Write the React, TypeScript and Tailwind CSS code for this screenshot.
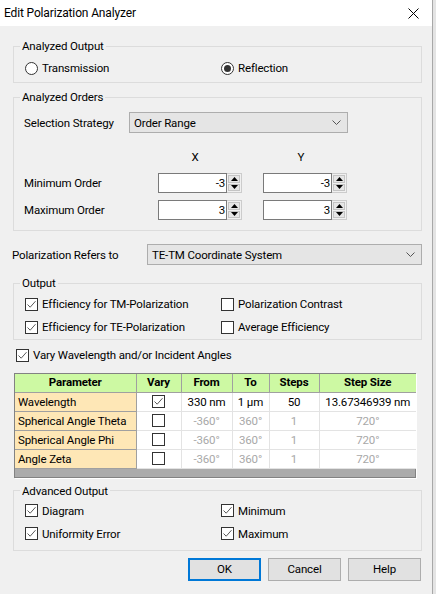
import React from 'react';

function Check({ checked }: { checked?: boolean }) {
  return (
    <span className="flex h-[13px] w-[13px] shrink-0 items-center justify-center border border-[#333333] bg-white">
      {checked && (
        <svg width="11" height="11" viewBox="0 0 11 11">
          <path d="M1.5 5.5 L4.2 8.2 L9.5 2.2" fill="none" stroke="#5a5a5a" strokeWidth="1" />
        </svg>
      )}
    </span>
  );
}

function Radio({ checked }: { checked?: boolean }) {
  return (
    <span className="flex h-[13px] w-[13px] shrink-0 items-center justify-center rounded-full border border-[#333333] bg-white">
      {checked && <span className="h-[7px] w-[7px] rounded-full bg-[#333333]" />}
    </span>
  );
}

function CheckRow({ label, checked }: { label: string; checked?: boolean }) {
  return (
    <div className="flex h-[16px] items-center gap-[4px]">
      <Check checked={checked} />
      <span>{label}</span>
    </div>
  );
}

function Chevron() {
  return (
    <svg width="9" height="5" viewBox="0 0 9 5">
      <path d="M0.5 0.5 L4.5 4.5 L8.5 0.5" fill="none" stroke="#555555" strokeWidth="1" />
    </svg>
  );
}

function Select({ value, className }: { value: string; className: string }) {
  return (
    <div
      className={`flex h-[21px] items-center justify-between border border-[#adadad] bg-[#e5e5e5] pl-[4px] pr-[6px] ${className}`}
    >
      <span>{value}</span>
      <Chevron />
    </div>
  );
}

function SpinBox({ value }: { value: string }) {
  return (
    <div className="flex h-[20px] w-[84px]">
      <div className="flex flex-1 items-center justify-end border border-[#7a7a7a] bg-white pr-[1px]">{value}</div>
      <div className="flex w-[15px] flex-col gap-[1px] border border-l-0 border-[#cccccc] bg-[#f0f0f0] p-[1px]">
        <div className="flex flex-1 items-center justify-center border border-[#c4c4c4] bg-[#e6e6e6]">
          <svg width="7" height="4" viewBox="0 0 7 4">
            <path d="M0 4 L3.5 0 L7 4 Z" fill="#000" />
          </svg>
        </div>
        <div className="flex flex-1 items-center justify-center border border-[#c4c4c4] bg-[#e6e6e6]">
          <svg width="7" height="4" viewBox="0 0 7 4">
            <path d="M0 0 L3.5 4 L7 0 Z" fill="#000" />
          </svg>
        </div>
      </div>
    </div>
  );
}

function Group({
  title,
  className,
  inner,
  children,
}: {
  title: string;
  className?: string;
  inner?: string;
  children: React.ReactNode;
}) {
  return (
    <fieldset className={`w-[409px] shrink-0 border border-[#dcdcdc] ${className ?? ''}`}>
      <legend className="ml-[6px] px-[2px] leading-[16px]">{title}</legend>
      <div className={inner}>{children}</div>
    </fieldset>
  );
}

const rows = [
  { name: 'Wavelength', vary: true, from: '330 nm', to: '1 µm', steps: '50', size: '13.67346939 nm' },
  { name: 'Spherical Angle Theta', vary: false, from: '-360°', to: '360°', steps: '1', size: '720°' },
  { name: 'Spherical Angle Phi', vary: false, from: '-360°', to: '360°', steps: '1', size: '720°' },
  { name: 'Angle Zeta', vary: false, from: '-360°', to: '360°', steps: '1', size: '720°' },
];

const headers = ['Parameter', 'Vary', 'From', 'To', 'Steps', 'Step Size'];
const widths = ['w-[121px]', 'w-[45px]', 'w-[51px]', 'w-[37px]', 'w-[50px]', 'w-[97px]'];

function ParamTable() {
  return (
    <div className="ml-[1px] w-[402px] border border-[#828282] shadow-[1px_1px_0_#ffffff]">
      <table className="w-full table-fixed border-collapse">
        <colgroup>
          {widths.map((w, i) => (
            <col key={i} className={w} />
          ))}
        </colgroup>
        <thead>
          <tr className="h-[18px] bg-[#cdf9a3]">
            {headers.map((h, i) => (
              <th
                key={h}
                className={`border-b border-[#a0a0a0] p-0 text-center font-bold leading-[17px] ${i < 5 ? 'border-r' : ''}`}
              >
                {h}
              </th>
            ))}
          </tr>
        </thead>
        <tbody>
          {rows.map((r) => {
            const dim = r.vary ? 'text-black' : 'text-[#a8a8a8]';
            return (
              <tr key={r.name} className="h-[19px] bg-white">
                <td className="whitespace-nowrap border-r border-b border-[#a0a0a0] bg-[#fee7b6] p-0 pl-[3px] leading-[18px]">
                  {r.name}
                </td>
                <td className="border-r border-b border-[#e3e3e3] p-0">
                  <div className="flex justify-center">
                    <Check checked={r.vary} />
                  </div>
                </td>
                <td className={`border-r border-b border-[#e3e3e3] p-0 text-center ${dim}`}>{r.from}</td>
                <td className={`border-r border-b border-[#e3e3e3] p-0 text-center ${dim}`}>{r.to}</td>
                <td className={`border-r border-b border-[#e3e3e3] p-0 text-center ${dim}`}>{r.steps}</td>
                <td className={`border-b border-[#e3e3e3] p-0 text-center ${dim}`}>{r.size}</td>
              </tr>
            );
          })}
        </tbody>
      </table>
      <div className="h-[8px] bg-[#ababab]" />
    </div>
  );
}

function Button({ label, primary }: { label: string; primary?: boolean }) {
  return (
    <button
      className={`h-[23px] w-[73px] bg-[#e1e1e1] ${primary ? 'border-2 border-[#0078d7]' : 'border border-[#adadad]'}`}
    >
      {label}
    </button>
  );
}

export default function App() {
  return (
    <div className="flex h-[594px] w-[436px] bg-[#e4e4e4] font-['Roboto',sans-serif] text-[11.5px] leading-[16px] tracking-[-0.15px] text-black">
      <div className="flex w-[433px] flex-col border-r border-[#a8a8a8] bg-[#f0f0f0]">
        {/* Title bar */}
        <div className="flex h-[26px] shrink-0 items-center justify-between bg-white pl-[4px] pr-[13px]">
          <span className="text-[12px]">Edit Polarization Analyzer</span>
          <svg width="11" height="11" viewBox="0 0 11 11">
            <path d="M0.5 0.5 L10.5 10.5 M10.5 0.5 L0.5 10.5" stroke="#000" strokeWidth="1" />
          </svg>
        </div>

        <div className="flex flex-col pl-[13px] pr-[10px]">
          {/* Analyzed Output */}
          <Group title="Analyzed Output" className="mt-[12px] pb-[6px] pt-[6px]" inner="pl-[11px]">
            <div className="grid grid-cols-[196px_1fr]">
              <div className="flex h-[16px] items-center gap-[4px]">
                <Radio />
                <span>Transmission</span>
              </div>
              <div className="flex h-[16px] items-center gap-[4px]">
                <Radio checked />
                <span>Reflection</span>
              </div>
            </div>
          </Group>

          {/* Analyzed Orders */}
          <Group title="Analyzed Orders" className="mt-[6px] pb-[10px] pt-[7px]" inner="pl-[10px]">
            <div className="flex items-center">
              <span className="w-[105px]">Selection Strategy</span>
              <Select value="Order Range" className="w-[219px]" />
            </div>
            <div className="mt-[16px] grid grid-cols-[134px_84px_21px_84px] items-center">
              <span />
              <span className="pr-[10px] text-center">X</span>
              <span />
              <span className="pr-[8px] text-center">Y</span>
            </div>
            <div className="mt-[8px] grid grid-cols-[134px_84px_21px_84px] items-center">
              <span>Minimum Order</span>
              <SpinBox value="-3" />
              <span />
              <SpinBox value="-3" />
            </div>
            <div className="mt-[7px] grid grid-cols-[134px_84px_21px_84px] items-center">
              <span>Maximum Order</span>
              <SpinBox value="3" />
              <span />
              <SpinBox value="3" />
            </div>
          </Group>

          {/* Polarization */}
          <div className="mt-[13px] -ml-[1px] flex items-center">
            <span className="w-[135px]">Polarization Refers to</span>
            <Select value="TE-TM Coordinate System" className="w-[275px]" />
          </div>

          {/* Output */}
          <Group title="Output" className="mt-[10px] pb-[4px] pt-[5px]" inner="pl-[11px]">
            <div className="grid grid-cols-[196px_1fr] gap-y-[7px]">
              <CheckRow label="Efficiency for TM-Polarization" checked />
              <CheckRow label="Polarization Contrast" />
              <CheckRow label="Efficiency for TE-Polarization" checked />
              <CheckRow label="Average Efficiency" />
            </div>
          </Group>

          <div className="mt-[7px] pl-[3px]">
            <CheckRow label="Vary Wavelength and/or Incident Angles" checked />
          </div>

          <div className="mt-[10px]">
            <ParamTable />
          </div>

          {/* Advanced Output */}
          <Group title="Advanced Output" className="mt-[5px] pb-[8px] pt-[4px]" inner="pl-[11px]">
            <div className="grid grid-cols-[196px_1fr] gap-y-[7px]">
              <CheckRow label="Diagram" checked />
              <CheckRow label="Minimum" checked />
              <CheckRow label="Uniformity Error" checked />
              <CheckRow label="Maximum" checked />
            </div>
          </Group>

          <div className="mt-[7px] flex justify-end gap-[7px] pr-[1px]">
            <Button label="OK" primary />
            <Button label="Cancel" />
            <Button label="Help" />
          </div>
        </div>
      </div>
    </div>
  );
}
